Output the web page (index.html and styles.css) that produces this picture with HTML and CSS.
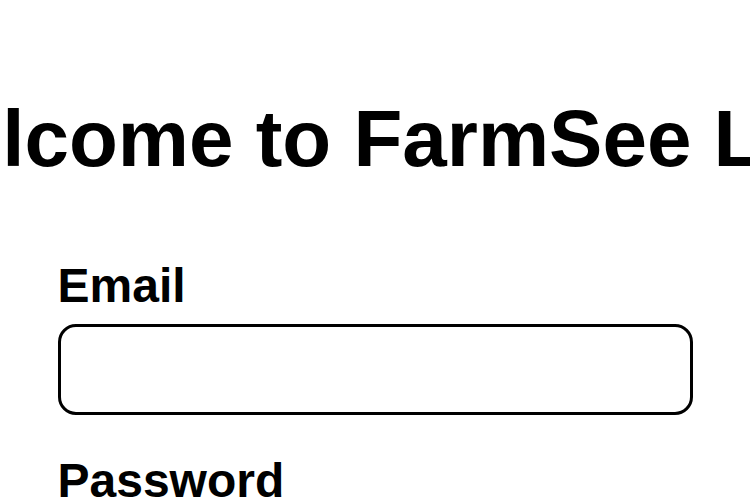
FILE: index.html
```html
<!DOCTYPE html>
<html lang="en">
<head>
<meta charset="utf-8">
<title>FarmSee Login</title>
<link rel="stylesheet" href="styles.css">
</head>
<body>
<main class="page">
  <header class="hero">
    <h1 class="title">Welcome to FarmSee Login</h1>
  </header>
  <form class="login-form">
    <label class="field-label" for="email">Email</label>
    <input class="field-input" id="email" type="email">
    <label class="field-label field-label--next" for="password">Password</label>
    <input class="field-input" id="password" type="password">
  </form>
</main>
</body>
</html>
```
FILE: styles.css
```css
html, body {
  margin: 0;
  padding: 0;
  background: #ffffff;
}

body {
  font-family: "Liberation Sans", Arial, sans-serif;
  color: #000000;
  overflow: hidden;
}

.page {
  display: flex;
  flex-direction: column;
}

.hero {
  display: flex;
  justify-content: center;
  padding-top: 93px;
}

.title {
  margin: 0 0 0 65px;
  flex-shrink: 0;
  white-space: nowrap;
  font-size: 80px;
  line-height: 92px;
  font-weight: 700;
}

.login-form {
  display: flex;
  flex-direction: column;
  width: 635px;
  margin: 73px auto 0;
}

.field-label {
  display: block;
  font-size: 48px;
  line-height: 55px;
  font-weight: 700;
}

.field-label--next {
  margin-top: 38px;
}

.field-input {
  box-sizing: border-box;
  width: 100%;
  height: 91px;
  margin-top: 11px;
  border: 3px solid #000000;
  border-radius: 18px;
  background: #ffffff;
  font: inherit;
  font-size: 32px;
  padding: 0 16px;
  outline: none;
}
```
